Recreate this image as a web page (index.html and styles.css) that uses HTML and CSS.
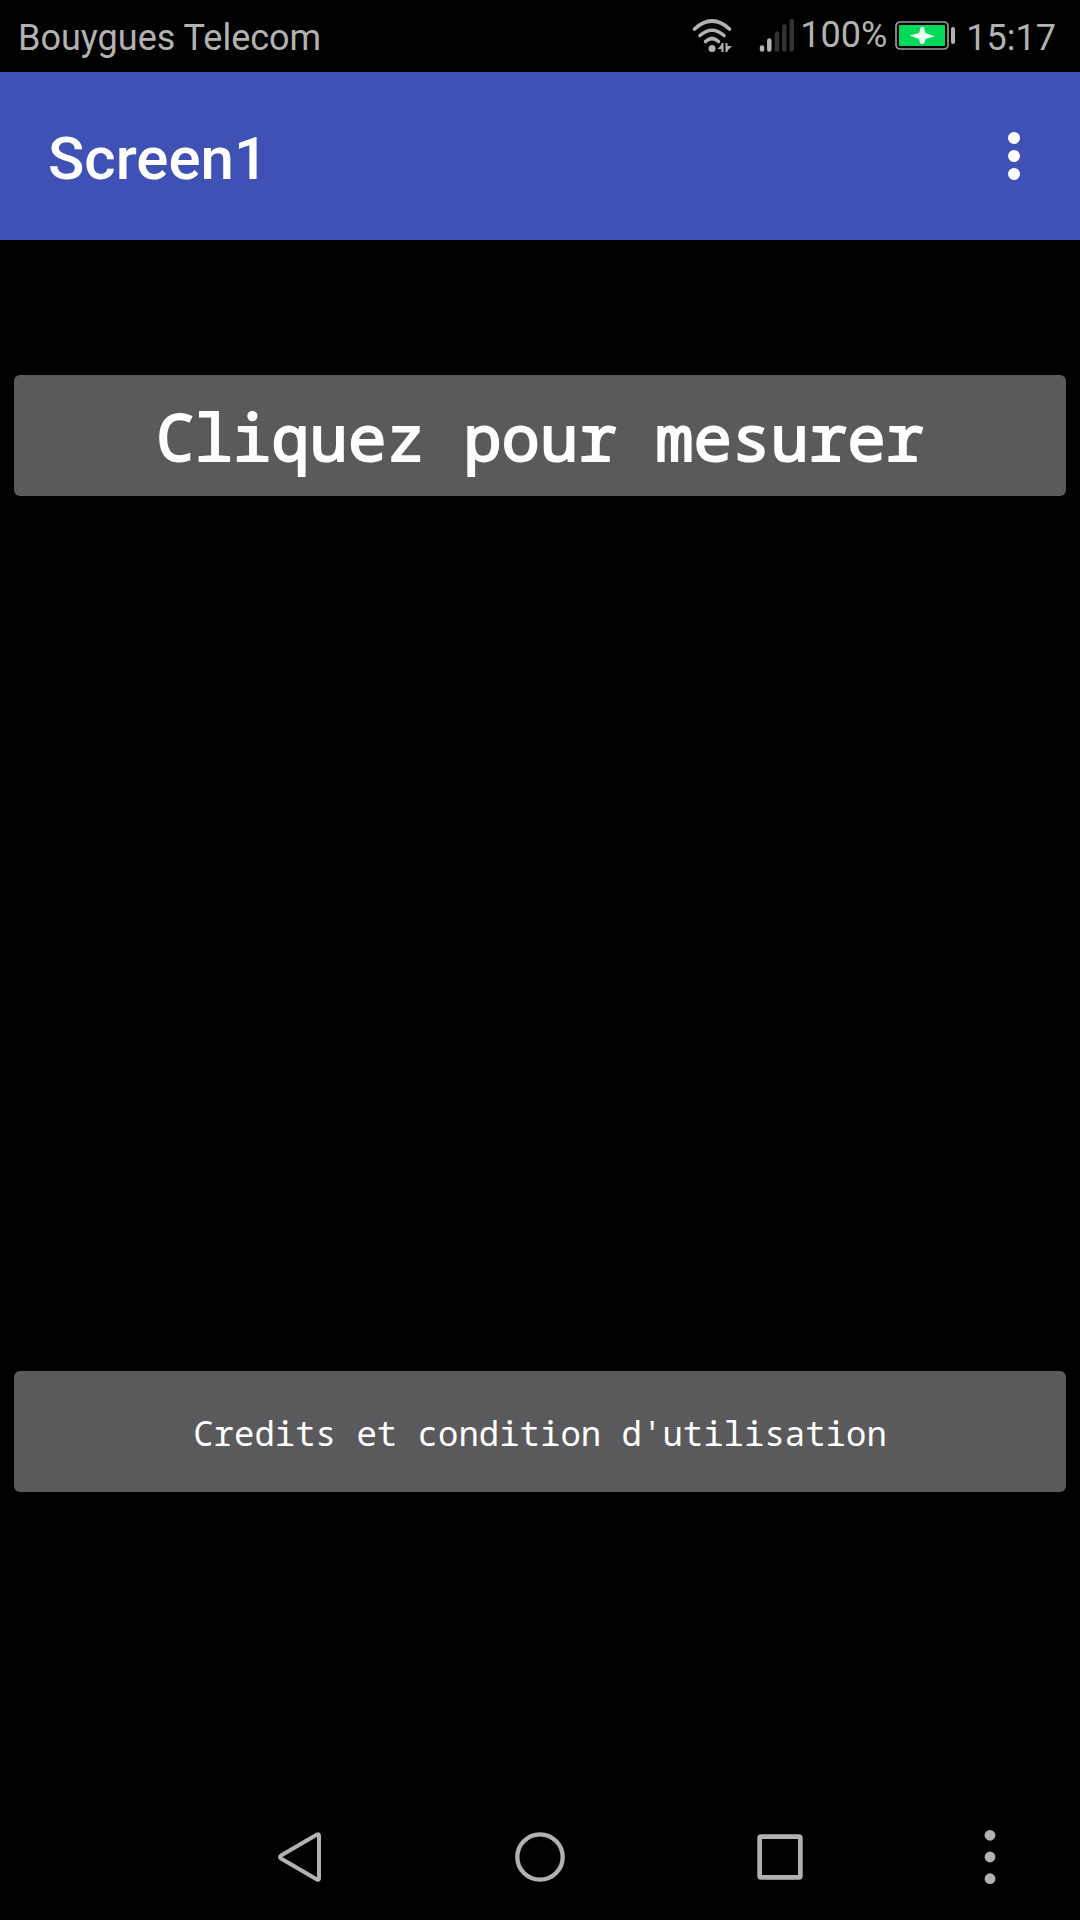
FILE: index.html
```html
<!DOCTYPE html>
<html lang="fr">
<head>
<meta charset="utf-8">
<meta name="viewport" content="width=device-width, initial-scale=1">
<title>Screen1</title>
<link rel="stylesheet" href="styles.css">
</head>
<body>
<div class="status-bar">
  <span class="carrier">Bouygues Telecom</span>
  <svg class="wifi" width="40" height="36" viewBox="0 0 40 36" aria-hidden="true">
    <g fill="none" stroke="#b2b2b2" stroke-width="3.600" stroke-linecap="round">
      <path d="M2.500 11Q20 -5 37.500 11"/>
      <path d="M8 17.500Q20 7 32 17.500"/>
      <path d="M13.500 23.500Q20 17.500 26.500 23.500"/>
    </g>
    <circle cx="20" cy="30.500" r="3.500" fill="#b2b2b2"/>
    <path d="M30.500 25V34M34.500 25V34" stroke="#b2b2b2" stroke-width="2"/>
    <path d="M31 25V31H25.500ZM34 34V28H40Z" fill="#b2b2b2"/>
  </svg>
  <svg class="signal" width="36" height="36" viewBox="0 0 36 36" aria-hidden="true">
    <g fill="none" stroke-width="4.500" stroke-linecap="round">
      <path d="M3 29.500V31.500M10.300 22.500V31.500" stroke="#b2b2b2"/>
      <path d="M18 15.500V31.500M25.300 8.500V31.500M32.700 3V31.500" stroke="#333"/>
    </g>
  </svg>
  <span class="battery-level">100%</span>
  <svg class="battery" width="62" height="30" viewBox="0 0 62 30" aria-hidden="true">
    <rect x="1" y="1" width="52" height="27" rx="4" fill="none" stroke="#999" stroke-width="1.700"/>
    <rect x="4" y="4" width="46" height="21" rx="1" fill="#00d95a"/>
    <path d="M27 6Q29.500 5 29.500 9L30.500 12L40 15.500L30.500 18L29.500 22Q27 24 25 22L24 18L14.500 14.500L24 12L25 9Q25 6 27 6Z" fill="#eafff2"/>
    <rect x="56" y="6" width="4" height="17" rx="2" fill="#b2b2b2"/>
  </svg>
  <span class="clock">15:17</span>
</div>

<header class="app-bar">
  <h1 class="title">Screen1</h1>
  <button class="icon-button" type="button" aria-label="Plus d'options">
    <svg width="12" height="48" viewBox="0 0 12 48" fill="#fff" aria-hidden="true">
      <circle cx="6" cy="6" r="6"/><circle cx="6" cy="24" r="6"/><circle cx="6" cy="42" r="6"/>
    </svg>
  </button>
</header>

<main class="content">
  <button class="action measure" type="button">Cliquez pour mesurer</button>
  <button class="action credits" type="button">Credits et condition d'utilisation</button>
</main>

<nav class="nav-bar" aria-label="Navigation">
  <button class="icon-button back" type="button" aria-label="Retour">
    <svg width="50" height="50" viewBox="0 0 50 50" aria-hidden="true">
      <path d="M42 2.500Q44 1.500 44 4V46Q44 48.500 42 47.500L6 26.500Q4 25 6 23.500Z" fill="none" stroke="#b2b2b2" stroke-width="4" stroke-linejoin="round"/>
    </svg>
  </button>
  <button class="icon-button" type="button" aria-label="Accueil">
    <svg width="50" height="50" viewBox="0 0 50 50" aria-hidden="true">
      <circle cx="25" cy="25" r="22.700" fill="none" stroke="#b2b2b2" stroke-width="4.300"/>
    </svg>
  </button>
  <button class="icon-button" type="button" aria-label="Applications récentes">
    <svg width="50" height="50" viewBox="0 0 50 50" aria-hidden="true">
      <path fill="#b2b2b2" fill-rule="evenodd" d="M6 2.200H44Q47.700 2.200 47.700 6V44Q47.700 47.700 44 47.700H6Q2.300 47.700 2.300 44V6Q2.300 2.200 6 2.200ZM7 7V43H43V7Z"/>
    </svg>
  </button>
  <button class="icon-button" type="button" aria-label="Menu">
    <svg width="12" height="56" viewBox="0 0 12 56" fill="#b2b2b2" aria-hidden="true">
      <circle cx="6" cy="6.300" r="5.400"/><circle cx="6" cy="28" r="5.400"/><circle cx="6" cy="49.700" r="5.400"/>
    </svg>
  </button>
</nav>
</body>
</html>
```
FILE: styles.css
```css
* {
  box-sizing: border-box;
}

body {
  display: flex;
  flex-direction: column;
  min-height: 100vh;
  margin: 0;
  background: #000;
  color: #fff;
  font-family: Roboto, "Noto Sans", sans-serif;
}

svg {
  display: block;
  flex: none;
}

.status-bar {
  display: flex;
  align-items: center;
  height: 72px;
  padding: 0 24px 0 18px;
  color: #b2b2b2;
  font-size: 36px;
  line-height: 42px;
}

.carrier {
  flex: 1;
  padding-top: 4px;
}

.wifi {
  margin-right: 27px;
}

.battery-level {
  margin: 0 8px 2px 5px;
}

.clock {
  margin-left: 9px;
  padding-top: 4px;
}

.app-bar {
  display: flex;
  align-items: center;
  justify-content: space-between;
  height: 168px;
  padding: 0 60px 0 48px;
  background: #3f51b5;
}

.title {
  margin: 6px 0 0;
  font-size: 60px;
  font-weight: 500;
  line-height: 70px;
}

.icon-button {
  display: flex;
  align-items: center;
  justify-content: center;
  padding: 0;
  border: 0;
  background: none;
}

.content {
  display: flex;
  flex: 1;
  flex-direction: column;
  justify-content: space-between;
  gap: 48px;
  padding: 135px 14px 302px;
}

.action {
  min-height: 121px;
  padding: 2px 16px 0;
  border: 0;
  border-radius: 6px;
  background: #5a5a5c;
  color: #fff;
  font-family: "Noto Sans Mono", "DejaVu Sans Mono", monospace;
}

.measure {
  font-size: 64px;
  line-height: 76px;
  -webkit-text-stroke: 2px #fff;
}

.credits {
  font-size: 34px;
  line-height: 40px;
}

.nav-bar {
  display: grid;
  grid-template-columns: 3fr 4fr 4fr 4fr 3fr;
  height: 126px;
}

.back {
  grid-column: 2;
}
```
